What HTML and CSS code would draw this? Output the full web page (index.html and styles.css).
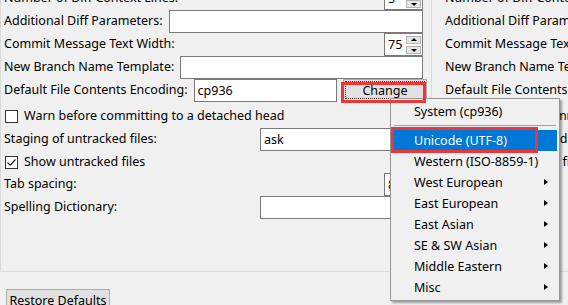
FILE: index.html
```html
<!DOCTYPE html>
<html lang="en">
<head>
  <meta charset="UTF-8">
  <title>Options</title>
  <link rel="stylesheet" href="styles.css">
</head>
<body>
<div class="panes">
  <section class="pane pane-left">
    <div class="row r1"><span class="lbl">Number of Diff Context Lines:</span>
      <div class="spin"><span class="spin-val">5</span><span class="spin-btns"><span class="sb up"></span><span class="sb dn"></span></span></div>
    </div>
    <div class="row"><span class="lbl">Additional Diff Parameters:</span><span class="field grow"></span></div>
    <div class="row"><span class="lbl">Commit Message Text Width:</span>
      <div class="spin"><span class="spin-val">75</span><span class="spin-btns"><span class="sb up"></span><span class="sb dn"></span></span></div>
    </div>
    <div class="row"><span class="lbl">New Branch Name Template:</span><span class="field grow"></span></div>
    <div class="row"><span class="lbl">Default File Contents Encoding:</span><span class="field enc">cp936</span>
      <button class="btn change"><span class="focus">Change</span></button>
    </div>
    <div class="row chk-row"><span class="chk"></span><span class="lbl">Warn before committing to a detached head</span></div>
    <div class="row"><span class="lbl">Staging of untracked files:</span><span class="field col2">ask</span></div>
    <div class="row r-short"><span class="chk on"><svg width="11" height="11" viewBox="0 0 11 11"><path d="M1.5 5.5 L4.2 8.2 L9.5 2.5" fill="none" stroke="#222" stroke-width="1.2"/></svg></span><span class="lbl">Show untracked files</span></div>
    <div class="row"><span class="lbl">Tab spacing:</span>
      <div class="spin"><span class="spin-val">8</span><span class="spin-btns"><span class="sb up"></span><span class="sb dn"></span></span></div>
    </div>
    <div class="row"><span class="lbl">Spelling Dictionary:</span><span class="field col2"></span></div>
  </section>

  <section class="pane pane-right">
    <div class="row r1"><span class="lbl">Number of Diff Context Lines:</span></div>
    <div class="row"><span class="lbl">Additional Diff Parameters:</span></div>
    <div class="row"><span class="lbl">Commit Message Text Width:</span></div>
    <div class="row"><span class="lbl">New Branch Name Template:</span></div>
    <div class="row"><span class="lbl">Default File Contents Encoding:</span></div>
    <div class="row chk-row"><span class="chk"></span><span class="lbl">Warn before committing to a detached head</span></div>
    <div class="row"><span class="lbl">Staging of untracked files:</span></div>
    <div class="row r-short"><span class="chk"></span><span class="lbl">Show untracked files</span></div>
    <div class="row"><span class="lbl">Tab spacing:</span></div>
    <div class="row"><span class="lbl">Spelling Dictionary:</span></div>
  </section>
</div>

<div class="footer">
  <button class="btn restore">Restore Defaults</button>
</div>

<!-- encoding popup -->
<ul class="menu">
  <li class="item">System (cp936)</li>
  <li class="sep"></li>
  <li class="item active">Unicode (UTF-8)</li>
  <li class="item">Western (ISO-8859-1)</li>
  <li class="item sub">West European</li>
  <li class="item sub">East European</li>
  <li class="item sub">East Asian</li>
  <li class="item sub">SE &amp; SW Asian</li>
  <li class="item sub">Middle Eastern</li>
  <li class="item sub">Misc</li>
</ul>

<div class="mark mark-change"></div>
<div class="mark mark-utf"></div>
</body>
</html>
```

FILE: styles.css
```css
* {
  margin: 0;
  padding: 0;
  box-sizing: border-box;
}

body {
  width: 568px;
  height: 305px;
  overflow: hidden;
  background: #f0f0f0;
  color: #000;
  font-family: "Noto Sans", "Noto Sans CJK SC", sans-serif;
  font-size: 12.5px;
  position: relative;
}

.panes {
  display: flex;
  margin-top: -13px;
}

.pane {
  flex: none;
  height: 285px;
  border-left: 1px solid #dadada;
  border-bottom: 1px solid #dadada;
}

.pane-left {
  width: 428px;
  padding: 0 5px 0 3px;
}

.pane-right {
  width: 300px;
  margin-left: 3px;
  padding-left: 13px;
}

.row {
  height: 23px;
  display: flex;
  align-items: center;
}

.row.r-short {
  height: 22px;
}

.chk-row {
  margin-top: 3px;
}

.lbl {
  white-space: nowrap;
  line-height: 1;
}

.field {
  height: 23px;
  background: #fff;
  border: 1px solid #7a7a7a;
  padding-left: 3px;
  line-height: 21px;
}

.grow {
  flex: 1;
  margin-left: 6px;
}

.enc {
  flex: 1;
  margin-left: 6px;
}

.col2 {
  width: 163px;
  margin-left: auto;
}

/* spinbox */
.spin {
  margin-left: auto;
  width: 39px;
  height: 23px;
  background: #fff;
  border: 1px solid #7a7a7a;
  display: flex;
  align-items: center;
  justify-content: space-between;
  padding: 0 1px 0 3px;
}

.spin-btns {
  display: flex;
  flex-direction: column;
  gap: 2px;
}

.sb {
  width: 15px;
  height: 8px;
  background: #e6e6e6;
  border: 1px solid #b4b4b4;
  position: relative;
}

.sb::after {
  content: "";
  position: absolute;
  left: 4px;
  border-left: 3px solid transparent;
  border-right: 3px solid transparent;
}

.sb.up::after {
  top: 1px;
  border-bottom: 3px solid #000;
}

.sb.dn::after {
  top: 2px;
  border-top: 3px solid #000;
}

/* buttons */
.btn {
  font: inherit;
  color: #000;
  background: #e1e1e1;
  border: 1px solid #adadad;
}

.change {
  flex: none;
  width: 84px;
  height: 22px;
  margin: 0 -4px 0 6px;
  align-self: flex-start;
  padding: 1px;
}

.change .focus {
  display: block;
  height: 18px;
  line-height: 17px;
  border: 1px dotted #333;
}

.chk {
  width: 13px;
  height: 13px;
  border: 1px solid #333;
  background: #fff;
  margin: 0 6px 0 1px;
  display: flex;
  align-items: center;
  justify-content: center;
}

.footer {
  padding: 17px 6px 0;
}

.restore {
  width: 104px;
  height: 24px;
  padding-bottom: 2px;
}

/* popup menu */
.menu {
  position: absolute;
  left: 390px;
  top: 98px;
  width: 170px;
  list-style: none;
  background: #f0f0f0;
  border: 1px solid #979797;
  padding: 2px;
  box-shadow: 2px 2px 2px rgba(0, 0, 0, 0.35);
}

.item {
  height: 21px;
  line-height: 21px;
  padding-left: 21px;
  position: relative;
}

.item.active {
  background: #0078d7;
  color: #fff;
}

.item.sub::after {
  content: "";
  position: absolute;
  right: 9px;
  top: 7px;
  border-top: 3.5px solid transparent;
  border-bottom: 3.5px solid transparent;
  border-left: 4px solid #000;
}

.sep {
  height: 8px;
  margin: 0 1px;
  border-top: 3px solid transparent;
  position: relative;
}

.sep::after {
  content: "";
  display: block;
  border-top: 1px solid #a0a0a0;
}

/* red annotation frames */
.mark {
  position: absolute;
  border: 3px solid #ee3636;
}

.mark-change {
  left: 341px;
  top: 82px;
  width: 85px;
  height: 21px;
}

.mark-utf {
  left: 391px;
  top: 127px;
  width: 147px;
  height: 26px;
}
```
